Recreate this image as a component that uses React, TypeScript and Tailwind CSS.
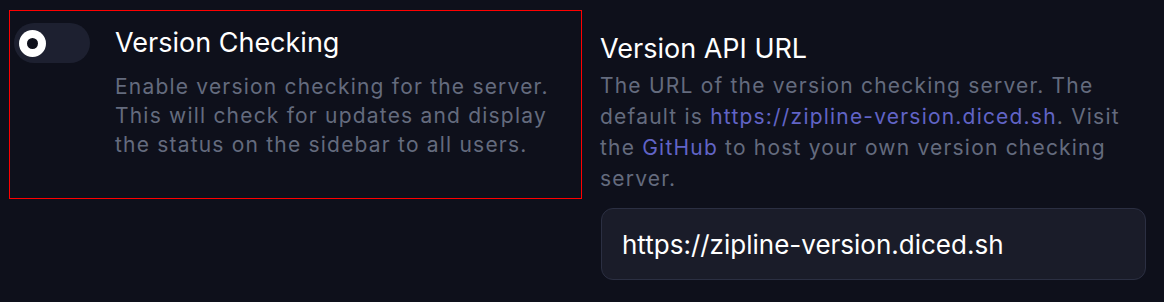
import React from "react";

export default function App() {
  return (
    <div
      className="w-[1164px] h-[302px] bg-[#0e101b] flex items-start pl-[9px] pt-[10px] gap-[18px]"
      style={{ fontFamily: "Inter, 'Noto Sans', sans-serif" }}
    >
      <div className="w-[573px] h-[189px] border border-[#ff0000] flex items-start pl-[4px] pt-[12px] gap-[25px] shrink-0">
        <div className="w-[76px] h-[40px] rounded-full bg-[#1d2030] flex items-center pl-[5px] shrink-0">
          <div className="w-[27px] h-[27px] rounded-full bg-white flex items-center justify-center">
            <div className="w-[11px] h-[11px] rounded-full bg-[#0e101b]" />
          </div>
        </div>
        <div className="flex flex-col -mt-[1px]">
          <div className="text-[27px] leading-[42px] text-white">Version Checking</div>
          <div className="mt-[8px] w-[445px] text-[21px] leading-[29px] tracking-[1.2px] text-[#646b7e]">
            Enable version checking for the server. This will check for updates and display the status on the sidebar to all users.
          </div>
        </div>
      </div>
      <div className="w-[546px] flex flex-col pt-[18px]">
        <div className="text-[27px] leading-[42px] text-white">Version API URL</div>
        <div className="w-[540px] text-[21px] leading-[31px] tracking-[1.2px] text-[#646b7e]">
          The URL of the version checking server. The default is{" "}
          <span className="text-[#6164c6]">https://zipline-version.diced.sh</span>. Visit the{" "}
          <span className="text-[#6164c6]">GitHub</span> to host your own version checking server.
        </div>
        <div className="mt-[14px] ml-[1px] h-[72px] rounded-[12px] bg-[#1a1c29] border border-[#2b2f42] flex items-center pl-[20px] text-[26px] text-white">
          https://zipline-version.diced.sh
        </div>
      </div>
    </div>
  );
}
